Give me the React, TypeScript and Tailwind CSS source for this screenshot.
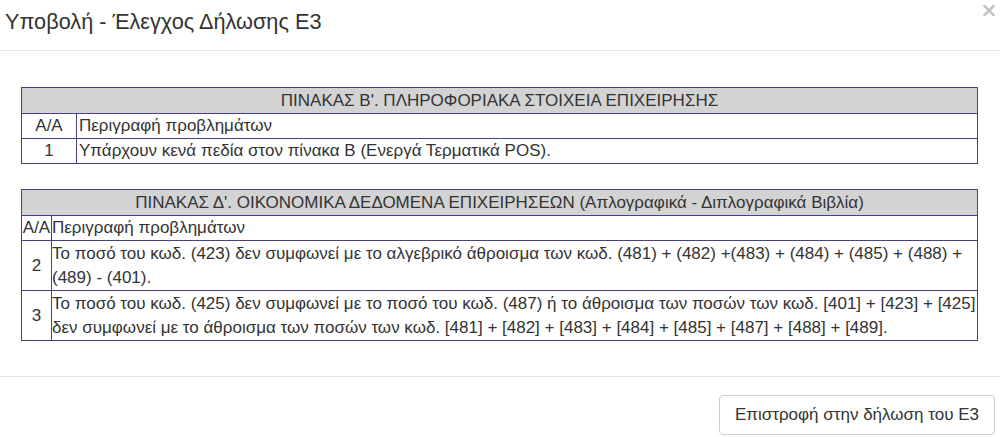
export default function App() {
  const cell = "border border-[#41418c] px-[2px] leading-[24px] align-middle";
  return (
    <div className="w-[1000px] h-[437px] bg-white text-[#333] font-['Liberation_Sans',Arial,sans-serif] overflow-hidden">
      {/* Header */}
      <div className="relative h-[51px] border-b border-[#e5e5e5] pl-[5px] pt-[10px]">
        <h4 className="text-[21.7px] leading-[24px]">Υποβολή - Έλεγχος Δήλωσης Ε3</h4>
        <button aria-label="Close" className="absolute right-[5px] top-[5px]">
          <svg width="12" height="11" viewBox="0 0 12 11">
            <path d="M1.5 1 L10.5 10 M10.5 1 L1.5 10" stroke="#c4c4c4" strokeWidth="2.6" strokeLinecap="square" />
          </svg>
        </button>
      </div>

      {/* Body */}
      <div className="h-[325px] pl-[21px] pr-[22px] pt-[36px] text-[17px]">
        <table className="w-full border-collapse">
          <tbody>
            <tr className="bg-[#d3d3d3]">
              <td colSpan={2} className={`${cell} text-center h-[26px]`}>
                ΠΙΝΑΚΑΣ Β'. ΠΛΗΡΟΦΟΡΙΑΚΑ ΣΤΟΙΧΕΙΑ ΕΠΙΧΕΙΡΗΣΗΣ
              </td>
            </tr>
            <tr>
              <td className={`${cell} text-center w-[55px]`}>Α/Α</td>
              <td className={cell}>Περιγραφή προβλημάτων</td>
            </tr>
            <tr>
              <td className={`${cell} text-center`}>1</td>
              <td className={cell}>Υπάρχουν κενά πεδία στον πίνακα Β (Ενεργά Τερματικά POS).</td>
            </tr>
          </tbody>
        </table>

        <table className="w-full border-collapse mt-[25px]">
          <tbody>
            <tr className="bg-[#d3d3d3]">
              <td colSpan={2} className={`${cell} text-center h-[26px]`}>
                ΠΙΝΑΚΑΣ Δ'. ΟΙΚΟΝΟΜΙΚΑ ΔΕΔΟΜΕΝΑ ΕΠΙΧΕΙΡΗΣΕΩΝ (Απλογραφικά - Διπλογραφικά Βιβλία)
              </td>
            </tr>
            <tr>
              <td className="border border-[#41418c] px-0 leading-[24px] text-center w-[30px]">Α/Α</td>
              <td className="border border-[#41418c] px-0 leading-[24px]">Περιγραφή προβλημάτων</td>
            </tr>
            <tr>
              <td className={`${cell} text-center`}>2</td>
              <td className="border border-[#41418c] px-0 leading-[24px] pt-px">
                Το ποσό του κωδ. (423) δεν συμφωνεί με το αλγεβρικό άθροισμα των κωδ. (481) + (482) +(483) + (484) + (485) + (488) + (489) - (401).
              </td>
            </tr>
            <tr>
              <td className={`${cell} text-center`}>3</td>
              <td className="border border-[#41418c] px-0 leading-[24px] pt-px">
                Το ποσό του κωδ. (425) δεν συμφωνεί με το ποσό του κωδ. (487) ή το άθροισμα των ποσών των κωδ. [401] + [423] + [425] δεν συμφωνεί με το άθροισμα των ποσών των κωδ. [481] + [482] + [483] + [484] + [485] + [487] + [488] + [489].
              </td>
            </tr>
          </tbody>
        </table>
      </div>

      {/* Footer */}
      <div className="border-t border-[#e5e5e5] flex justify-end pr-[5px] pt-[18px]">
        <button className="h-[40px] px-[15px] border border-[#ccc] rounded-[4px] bg-white text-[17px] text-[#333]">
          Επιστροφή στην δήλωση του Ε3
        </button>
      </div>
    </div>
  );
}
